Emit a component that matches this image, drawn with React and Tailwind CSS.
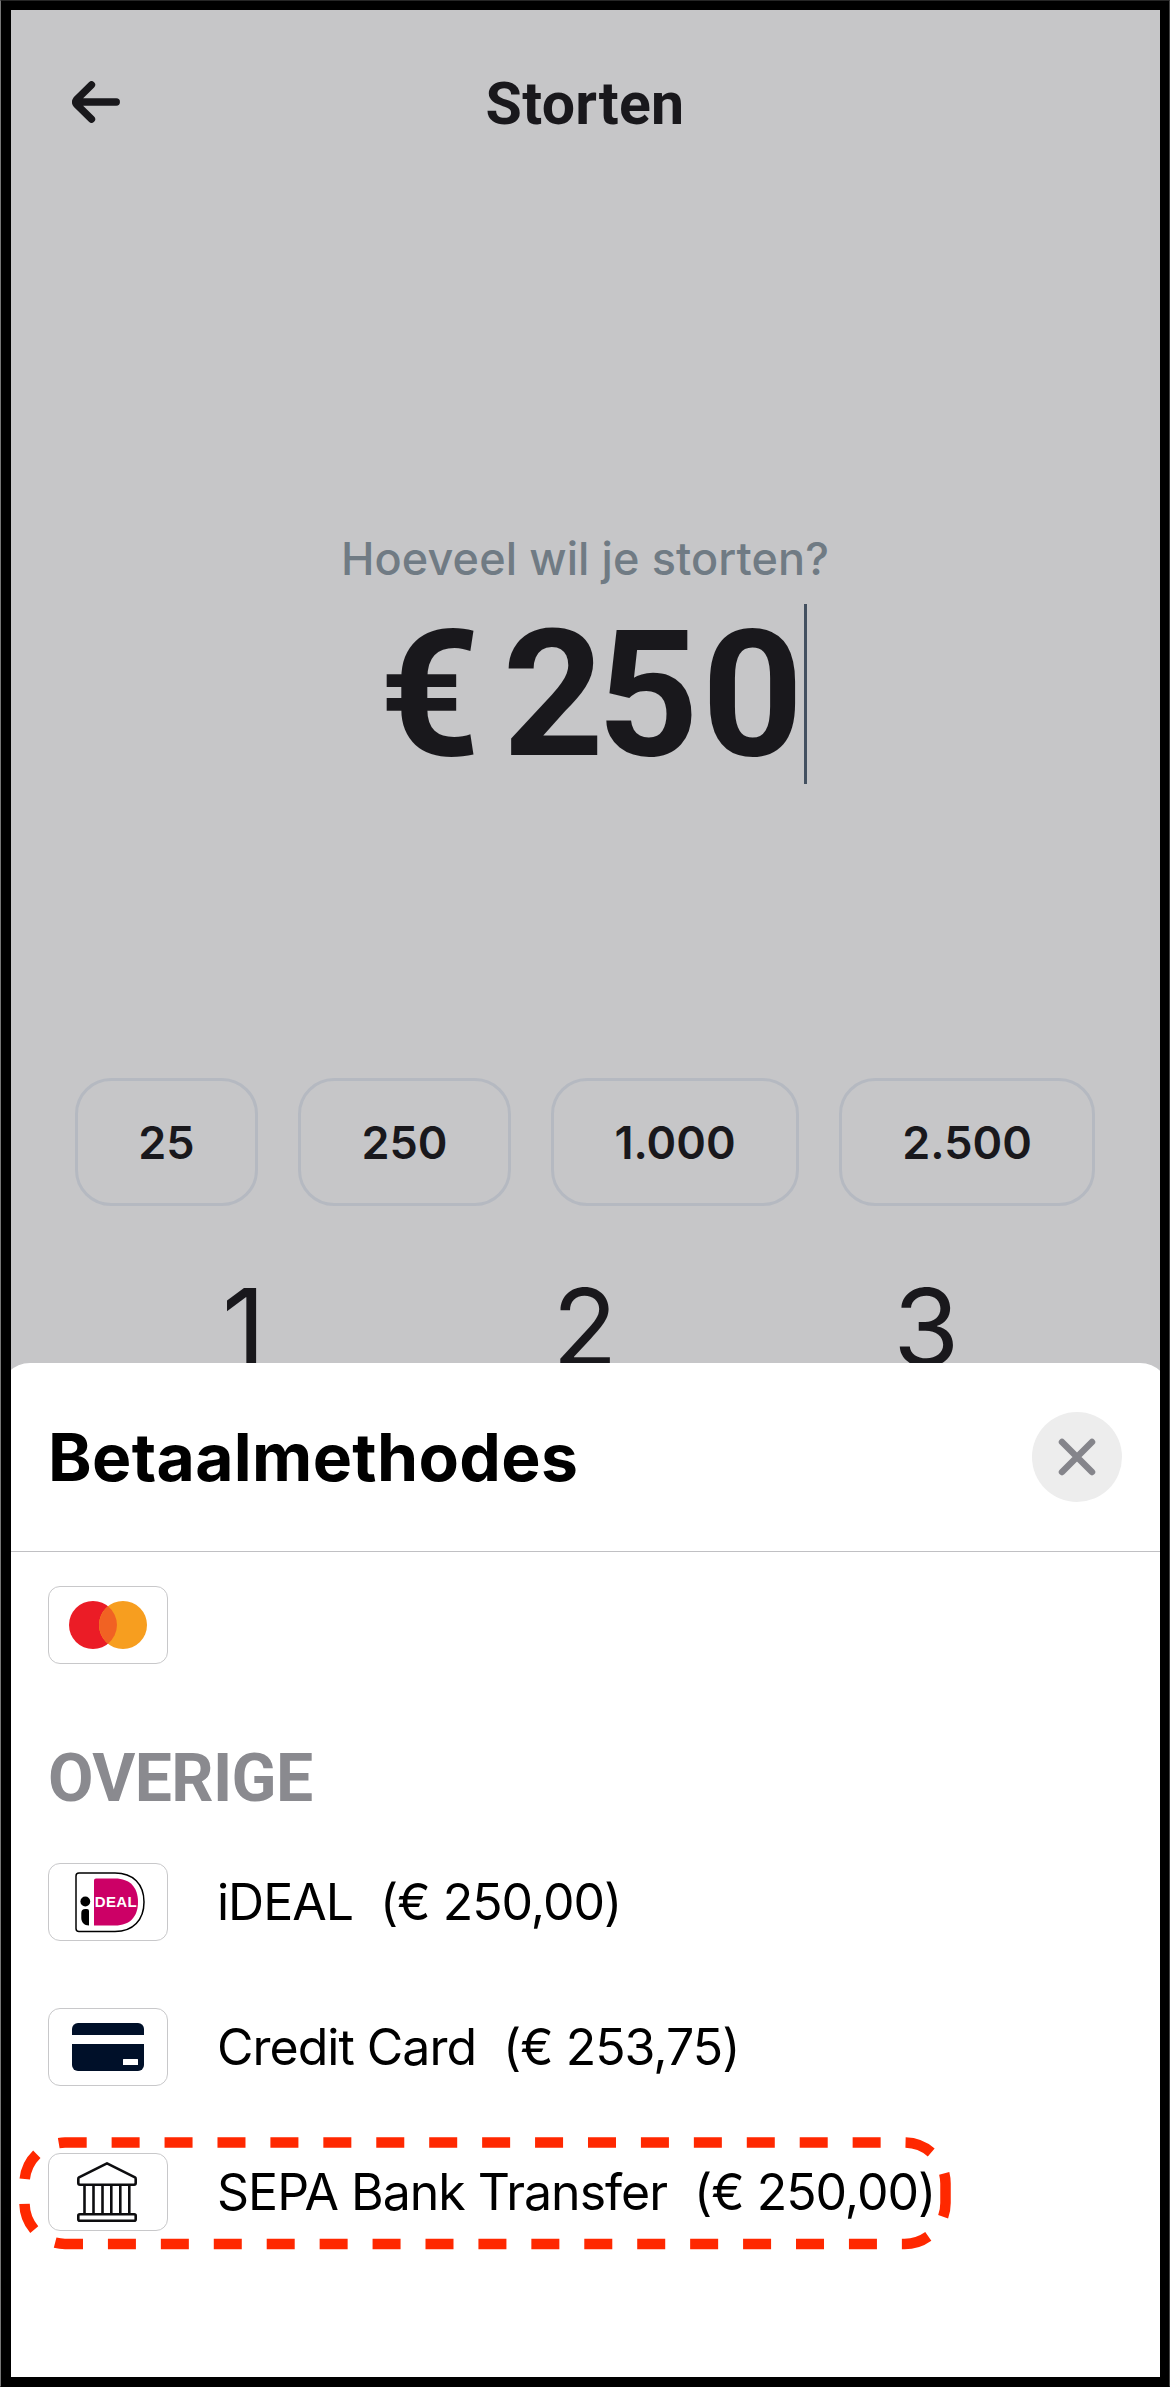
const presets = [
  { label: '25', width: 'w-[183px]' },
  { label: '250', width: 'w-[213px]' },
  { label: '1.000', width: 'w-[248px]' },
  { label: '2.500', width: 'w-[256px]' },
];

const methods = [
  { name: 'iDEAL', price: '(€ 250,00)', Icon: IdealIcon },
  { name: 'Credit Card', price: '(€ 253,75)', Icon: CardIcon },
  { name: 'SEPA Bank Transfer', price: '(€ 250,00)', Icon: BankIcon, highlighted: true },
];

function MastercardIcon() {
  return (
    <svg width="118" height="76" viewBox="49 1587 118 76">
      <circle cx="93" cy="1625" r="24" fill="#eb1c26" />
      <circle cx="123" cy="1625" r="24" fill="#f79e1f" />
      <path d="M108 1606.3a24 24 0 0 1 0 37.4a24 24 0 0 1 0-37.4z" fill="#f16223" />
    </svg>
  );
}

function IdealIcon() {
  return (
    <svg width="118" height="76" viewBox="0 0 118 76">
      <path
        d="M30 9H66C84 9 95 20 95 38S84 67.5 66 67.5H30a3 3 0 0 1-3-3V12a3 3 0 0 1 3-3z"
        fill="#fff"
        stroke="#000"
        strokeWidth="1.5"
      />
      <path d="M47 14.5H66C81 14.5 89 23.5 89 38S81 61.5 66 61.5H45V16.5a2 2 0 0 1 2-2z" fill="#cc0066" />
      <circle cx="36.3" cy="37.5" r="4.9" fill="#000" />
      <path d="M36.3 45H38a2 2 0 0 1 2 2V61.5C35 61.5 32.3 58 32.3 54V49a4 4 0 0 1 4-4z" fill="#000" />
      <text x="45.7" y="42.8" textLength="41" className="fill-white font-['Liberation_Sans'] text-[15px] font-bold">
        DEAL
      </text>
    </svg>
  );
}

function CardIcon() {
  return (
    <svg width="118" height="76" viewBox="0 0 118 76" fill="#001029">
      <path d="M29 14H89a6 6 0 0 1 6 6V26H23V20a6 6 0 0 1 6-6z" />
      <path d="M23 35H95V56a6 6 0 0 1-6 6H29a6 6 0 0 1-6-6z" />
      <rect x="74" y="50" width="15" height="6" rx="0.5" fill="#fff" />
    </svg>
  );
}

function BankIcon() {
  return (
    <svg
      width="118"
      height="76"
      viewBox="0 0 118 76"
      fill="none"
      stroke="#0d0d0f"
      strokeWidth="2.6"
      strokeLinejoin="round"
    >
      <path d="M58 9.3L86 23.3Q86.700 23.700 86.700 25V29Q86.700 30.700 85 30.700H31Q29.300 30.700 29.300 29V25Q29.300 23.700 30 23.300Z" />
      <path d="M35.5 31V60M44.500 31V60M53.500 31V60M62.300 31V60M71.300 31V60M80.300 31V60" />
      <rect x="29.3" y="60.3" width="57.4" height="6.4" rx="1.5" />
    </svg>
  );
}

function IconBox({ children }) {
  return (
    <div className="h-[78px] w-[120px] shrink-0 overflow-hidden rounded-xl border border-[#c8c8ca] bg-white">
      {children}
    </div>
  );
}

// dashed outline round the highlighted row
function Marker() {
  return (
    <svg className="pointer-events-none absolute -top-4 -left-12 h-[116px] w-[970px]" viewBox="0 2137 970 116" fill="none">
      <path
        d="M945.5 2189V2203A41 41 0 0 1 904.5 2244H65A41 41 0 0 1 24.5 2203V2183.5A41 41 0 0 1 65 2142.5H904.5A41 41 0 0 1 945.5 2183.5V2189"
        stroke="#ff2800"
        strokeWidth="10.5"
        strokeDasharray="28 24.93"
      />
    </svg>
  );
}

function Screen() {
  return (
    <section className="h-[1393px] overflow-hidden bg-[#c6c6c8] pt-[10px] text-[#19181c]">
      <header className="grid h-[184px] grid-cols-[1fr_auto_1fr] items-center px-[72px]">
        <svg
          width="48"
          height="42"
          viewBox="0 0 48 42"
          fill="none"
          stroke="currentColor"
          strokeWidth="7.3"
          strokeLinecap="round"
          strokeLinejoin="round"
        >
          <path d="M19.5 3.8L4.500 18.600Q2.700 21 4.500 23.400L19.500 38.200M5 21H44.300" />
        </svg>
        <h1 className="pt-[3px] font-['Roboto'] text-[59px] leading-none font-bold tracking-[0.3px]">Storten</h1>
      </header>

      <p className="mt-[338px] text-center text-[45px] leading-[54px] font-medium tracking-[0.1px] text-[#707b84]">
        Hoeveel wil je storten?
      </p>
      <div className="mt-[18px] flex h-[180px] items-center pl-[379px] font-['Roboto'] text-[177px] leading-none font-bold">
        <span className="pt-px">€</span>
        <span className="ml-[22px] pt-px">
          <span className="tracking-[-7px]">2</span>
          <span className="tracking-[3px]">5</span>0
        </span>
        <span className="ml-px h-full w-[3px] bg-[#435060]" />
      </div>

      <div className="mt-[294px] flex gap-10 pl-[75px]">
        {presets.map((p) => (
          <button
            key={p.label}
            className={`${p.width} h-32 rounded-[36px] border-3 border-[#b5b9c1] pt-0.5 text-[45px] font-semibold`}
          >
            {p.label}
          </button>
        ))}
      </div>

      <div className="mt-[67px] grid grid-cols-3 px-[73px] text-center text-[107px] leading-[108px]">
        <span>1</span>
        <span>2</span>
        <span>3</span>
      </div>
    </section>
  );
}

function PaymentSheet() {
  return (
    <section className="relative -mt-[30px] flex-1 rounded-t-[30px] bg-white text-black">
      <div className="flex h-[189px] items-center justify-between border-b border-[#c0c0c3] px-12">
        <h2 className="text-[66px] leading-none font-bold tracking-[0.35px]">Betaalmethodes</h2>
        <button className="flex size-[90px] items-center justify-center rounded-full bg-[#ededed]">
          <svg width="38" height="38" viewBox="0 0 38 38" stroke="#85858b" strokeWidth="6.5" strokeLinecap="round">
            <path d="M4 4L34 34M34 4L4 34" />
          </svg>
        </button>
      </div>

      <div className="px-12 pt-[34px]">
        <IconBox>
          <MastercardIcon />
        </IconBox>
        <h3 className="mt-[82px] font-['Roboto'] text-[66px] leading-none font-bold tracking-[-0.6px] text-[#8a8a8f]">
          OVERIGE
        </h3>
        <ul className="mt-[51px] space-y-[67px]">
          {methods.map(({ name, price, Icon, highlighted }) => (
            <li key={name} className="relative flex h-[78px] items-center text-[50px] tracking-[-1px]">
              <IconBox>
                <Icon />
              </IconBox>
              <span className="ml-[49px]">{name}</span>
              <span className="ml-[27px]">{price}</span>
              {highlighted && <Marker />}
            </li>
          ))}
        </ul>
      </div>
    </section>
  );
}

export default function App() {
  return (
    <main className="relative flex h-[2387px] w-[1170px] flex-col overflow-hidden bg-white font-['Inter',sans-serif]">
      <Screen />
      <PaymentSheet />
      {/* device frame */}
      <div className="pointer-events-none absolute inset-0 border border-t-[#262626] border-r-[#444444] border-b-black border-l-[#777777]">
        <div className="h-full border-t-9 border-r-9 border-b-9 border-l-10 border-black" />
      </div>
    </main>
  );
}
